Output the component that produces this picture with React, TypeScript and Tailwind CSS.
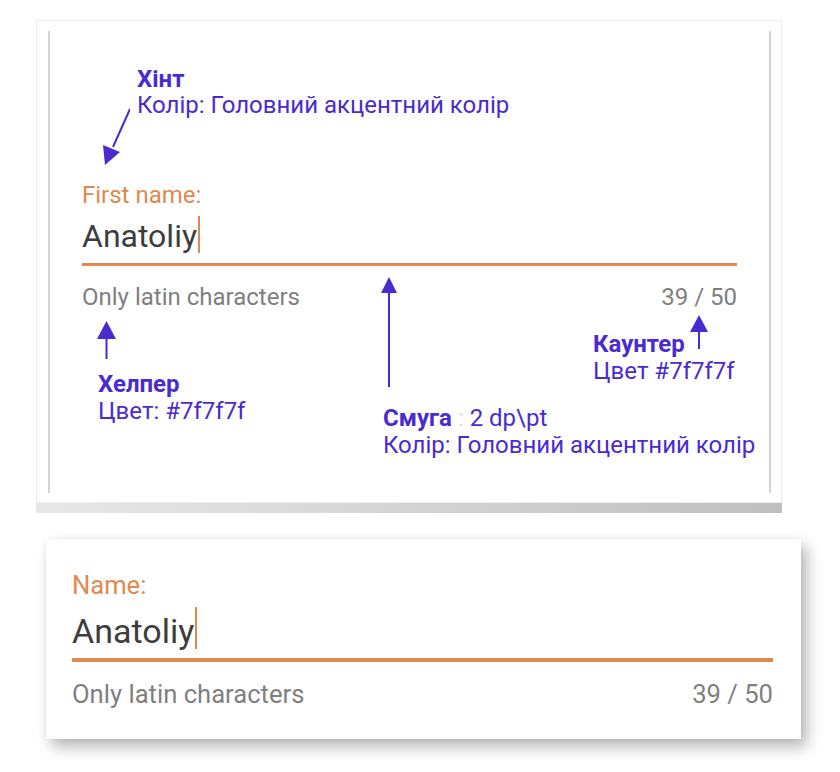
import React from 'react'

const accent = 'text-[#4a2bd0]'

function UpArrow({ h, w = 18, head = 17 }: { h: number; w?: number; head?: number }) {
  return (
    <svg width={w} height={h} viewBox={`0 0 ${w} ${h}`}>
      <polygon points={`${w / 2},0 0,${head} ${w},${head}`} fill="#4a2bd0" />
      <line x1={w / 2} y1={head - 1} x2={w / 2} y2={h} stroke="#4a2bd0" strokeWidth="2" />
    </svg>
  )
}

function Field({ big }: { big?: boolean }) {
  if (big) {
    return (
      <div>
        <div className="text-[25.6px] leading-[30px] text-[#e0894e]">Name:</div>
        <div className="mt-[10px] flex items-start h-[42px]">
          <span className="text-[34px] leading-[42px] text-[#3d3d3d]">Anatoliy</span>
          <span className="-mt-[3px] ml-[1px] w-[2px] h-[42px] bg-[#e0894e]" />
        </div>
        <div className="mt-[6px] h-[4px] bg-[#e0894e]" />
        <div className="mt-[17px] flex justify-between text-[25.6px] leading-[30px] text-[#7f7f7f]">
          <span>Only latin characters</span>
          <span>39 / 50</span>
        </div>
      </div>
    )
  }
  return (
    <div>
      <div className="text-[24px] leading-[28px] text-[#e0894e]">First name:</div>
      <div className="mt-[7px] flex items-start h-[40px]">
        <span className="text-[32px] leading-[40px] text-[#3d3d3d]">Anatoliy</span>
        <span className="ml-[1px] w-[2px] h-[37px] bg-[#e0894e]" />
      </div>
      <div className="mt-[7px] h-[3px] bg-[#e0894e]" />
      <div className="mt-[17px] flex justify-between text-[24px] leading-[28px] text-[#7f7f7f]">
        <span>Only latin characters</span>
        <span>39 / 50</span>
      </div>
    </div>
  )
}

export default function App() {
  return (
    <div className="w-[840px] h-[772px] bg-white pt-[20px] font-['Roboto',sans-serif]">
      {/* spec card */}
      <div className="ml-[36px] w-[746px] h-[483px] border border-[#ededed] bg-white pt-[10px] pb-[9px] pl-[11px] pr-[10px]">
        <div className="relative h-full border-l-2 border-r-2 border-[#d4d4d4] px-[32px]">
          <div className={`pt-[35px] pl-[55px] text-[24px] leading-[26px] ${accent}`}>
            <div className="font-bold">Хінт</div>
            <div>Колір: Головний акцентний колір</div>
          </div>

          <svg className="absolute left-[40px] top-[69px]" width="40" height="70" viewBox="0 0 40 70">
            <line x1="40" y1="9" x2="23" y2="47" stroke="#4a2bd0" strokeWidth="2" />
            <polygon points="13,45 30,52 15,65" fill="#4a2bd0" />
          </svg>

          <div className="mt-[63px]">
            <Field />
          </div>

          {/* helper note */}
          <div className="absolute left-[47px] top-[290px]">
            <UpArrow h={38} w={19} head={18} />
          </div>
          <div className={`absolute left-[48px] top-[340px] text-[24px] leading-[27px] ${accent}`}>
            <div className="font-bold">Хелпер</div>
            <div>Цвет: #7f7f7f</div>
          </div>

          {/* underline note */}
          <div className="absolute left-[331px] top-[246px]">
            <UpArrow h={110} w={16} head={16} />
          </div>
          <div className={`absolute left-[333px] top-[374px] text-[24px] leading-[27px] ${accent}`}>
            <div>
              <span className="font-bold">Смуга</span>
              <span className="text-[#dcd5f8]"> : </span>
              <span>2 dp\pt</span>
            </div>
            <div>Колір: Головний акцентний колір</div>
          </div>

          {/* counter note */}
          <div className="absolute left-[640px] top-[284px]">
            <UpArrow h={34} w={18} head={17} />
          </div>
          <div className={`absolute left-[543px] top-[300px] text-[24px] leading-[27px] ${accent}`}>
            <div className="font-bold">Каунтер</div>
            <div>Цвет #7f7f7f</div>
          </div>
        </div>
      </div>
      <div className="ml-[36px] w-[746px] h-[10px] bg-gradient-to-r from-[#e8e8e8] via-[#d4d4d4] to-[#bfbfbf]" />

      {/* live example */}
      <div className="mt-[26px] ml-[46px] w-[755px] h-[200px] bg-white pt-[31px] pl-[26px] pr-[28px] shadow-[6px_8px_14px_rgba(0,0,0,0.28),0_0_6px_rgba(0,0,0,0.06)]">
        <Field big />
      </div>
    </div>
  )
}
